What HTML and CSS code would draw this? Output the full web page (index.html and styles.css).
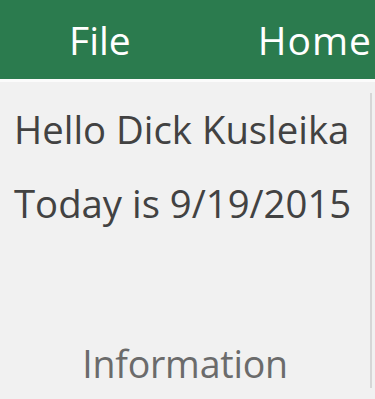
FILE: index.html
```html
<!DOCTYPE html>
<html>
<head>
<meta charset="utf-8">
<link rel="stylesheet" href="styles.css">
</head>
<body>
<div class="ribbon">
  <span class="tab tab-file">File</span>
  <span class="tab tab-home">Home</span>
</div>
<div class="panel">
  <div class="group">
    <div class="content">
      <div class="line">Hello Dick Kusleika</div>
      <div class="line">Today is 9/19/2015</div>
    </div>
    <div class="label">Information</div>
  </div>
</div>
</body>
</html>
```
FILE: styles.css
```css
html, body {
  margin: 0;
  padding: 0;
}
body {
  width: 375px;
  height: 399px;
  overflow: hidden;
  background: #f1f1f1;
  font-family: "Open Sans", "Noto Sans", sans-serif;
}
.ribbon {
  height: 79px;
  background: #2b7b4e;
  border-bottom: 3px solid #fbfbfb;
  display: flex;
  align-items: flex-start;
  color: #ffffff;
  font-size: 39px;
  letter-spacing: 0;
}
.tab {
  line-height: 1;
  padding-top: 20px;
}
.tab-file {
  margin-left: 69px;
}
.tab-home {
  margin-left: 127px;
  letter-spacing: 1px;
}
.panel {
  height: 306px;
  border-bottom: 3px solid #dadada;
  padding-top: 11px;
}
.group {
  width: 370px;
  height: 295px;
  border-right: 2px solid #d6d6d6;
  display: flex;
  flex-direction: column;
}
.content {
  flex: 1;
  padding-left: 14px;
  padding-top: 17px;
  color: #424242;
  font-size: 38.3px;
  letter-spacing: 0;
}
.line {
  height: 74px;
  line-height: 1;
}
.label {
  text-align: center;
  color: #6b6b6b;
  font-size: 37.5px;
  letter-spacing: -0.2px;
  line-height: 1;
  padding-bottom: 6px;
}
```
